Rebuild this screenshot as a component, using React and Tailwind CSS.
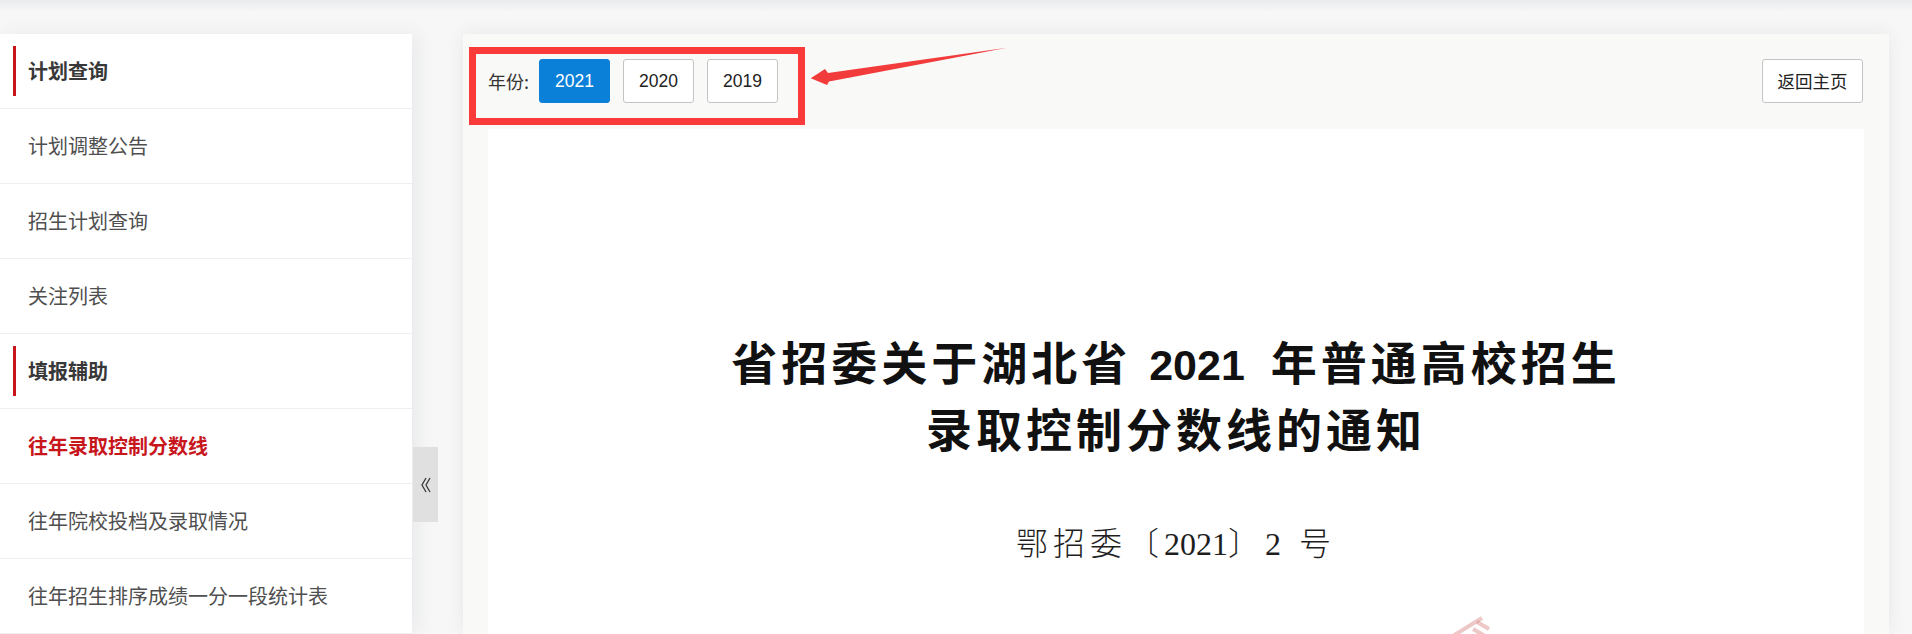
import React from 'react';

const menuItems = [
  { label: '计划查询', head: true },
  { label: '计划调整公告' },
  { label: '招生计划查询' },
  { label: '关注列表' },
  { label: '填报辅助', head: true },
  { label: '往年录取控制分数线', active: true },
  { label: '往年院校投档及录取情况' },
  { label: '往年招生排序成绩一分一段统计表' },
];

const years = ['2021', '2020', '2019'];

function Sidebar() {
  return (
    <aside className="relative w-[412px] shrink-0 bg-white shadow-[6px_0_18px_rgba(40,50,90,0.07)]">
      {menuItems.map((item) => (
        <div
          key={item.label}
          className="relative flex h-[75px] items-center border-b border-[#eeeff1] pl-[28px]"
        >
          {item.head && <span className="absolute left-[13px] top-[12px] h-[50px] w-[3px] bg-[#c8141b]" />}
          <span
            className={`text-[20px] ${
              item.head
                ? 'font-bold text-[#383838]'
                : item.active
                ? 'font-bold text-[#c8161d]'
                : 'text-[#4f4f4f]'
            }`}
          >
            {item.label}
          </span>
        </div>
      ))}

      {/* collapse tab */}
      <button className="absolute left-[413px] top-[413px] flex h-[75px] w-[25px] items-center justify-center bg-[#e0e0e0]">
        <svg width="12" height="16" viewBox="0 0 12 16" fill="none" stroke="#3a3a3a" strokeWidth="1.3">
          <polyline points="6,1 2,8 6,15" />
          <polyline points="10,1 6,8 10,15" />
        </svg>
      </button>
    </aside>
  );
}

function YearBar() {
  return (
    <div className="flex items-start justify-between pl-[6px] pr-[26px] pt-[13px]">
      {/* annotated year selector */}
      <div className="h-[78px] w-[336px] border-[7px] border-[#fb3a3a] pl-[12px] pt-[5px]">
        <div className="flex h-[44px] items-center">
          <span className="mr-[10px] text-[18px] text-[#333]">年份:</span>
          <div className="flex gap-[13px]">
            {years.map((y, i) => (
              <button
                key={y}
                className={`h-[44px] w-[71px] rounded-[3px] border font-['Liberation_Sans',sans-serif] text-[17.5px] ${
                  i === 0
                    ? 'border-[#0a80d8] bg-[#0a80d8] text-white'
                    : 'border-[#c4c4c4] bg-white text-[#222]'
                }`}
              >
                {y}
              </button>
            ))}
          </div>
        </div>
      </div>

      <button className="mt-[12px] h-[44px] w-[101px] rounded-[3px] border border-[#c4c4c4] bg-white text-[17.5px] text-[#222]">
        返回主页
      </button>
    </div>
  );
}

function Document() {
  return (
    <div className="mx-[25px] mt-[4px] h-[600px] bg-white pt-[200px]">
      <div className="text-center text-[46px] font-bold leading-[62px] tracking-[4px] text-[#111]">
        <div>
          省招委关于湖北省
          <span className="ml-[18px] mr-[26px] font-['Liberation_Sans',sans-serif] text-[43px] tracking-normal">2021</span>
          年普通高校招生
        </div>
        <div>录取控制分数线的通知</div>
      </div>

      <div className="mt-[66px] text-center font-['Liberation_Serif','Noto_Sans_CJK_SC',serif] text-[32px] font-light leading-[40px] text-[#1e1e1e]">
        <span className="tracking-[5px]">鄂招委〔</span>
        <span>2021</span>
        <span className="tracking-[5px]">〕2 号</span>
      </div>

      {/* edge of the red seal */}
      <div className="pl-[958px] pt-[52px]">
        <svg width="50" height="24" viewBox="0 0 50 24" fill="none" stroke="rgba(205,95,95,0.35)" strokeWidth="4">
          <path d="M2 23 L36 2" />
          <path d="M31 6 L43 13" />
          <path d="M27 13 L39 20" />
        </svg>
      </div>
    </div>
  );
}

export default function App() {
  return (
    <div className="relative h-[634px] w-full overflow-hidden bg-[#f7f7f7] font-['Noto_Sans_CJK_SC','Liberation_Sans',sans-serif]">
      <div className="h-[34px] bg-linear-to-b from-[#eaebee] via-[#f7f7f7] via-35% to-[#f7f7f7]" />
      <div className="flex">
        <Sidebar />

        {/* Main panel */}
        <section className="relative ml-[51px] h-[600px] w-[1426px] shrink-0 bg-[#f9f9f8] shadow-[0_0_18px_rgba(40,50,90,0.08)]">
          <YearBar />
          <Document />

          {/* annotation arrow */}
          <svg className="absolute left-[337px] top-[6px]" width="220" height="55" viewBox="0 0 220 55">
            <polygon
              points="10.7,38.3 25,29 28,33 207,7.7 29,41.5 27,45"
              fill="#f23b3b"
            />
          </svg>
        </section>
      </div>
    </div>
  );
}
